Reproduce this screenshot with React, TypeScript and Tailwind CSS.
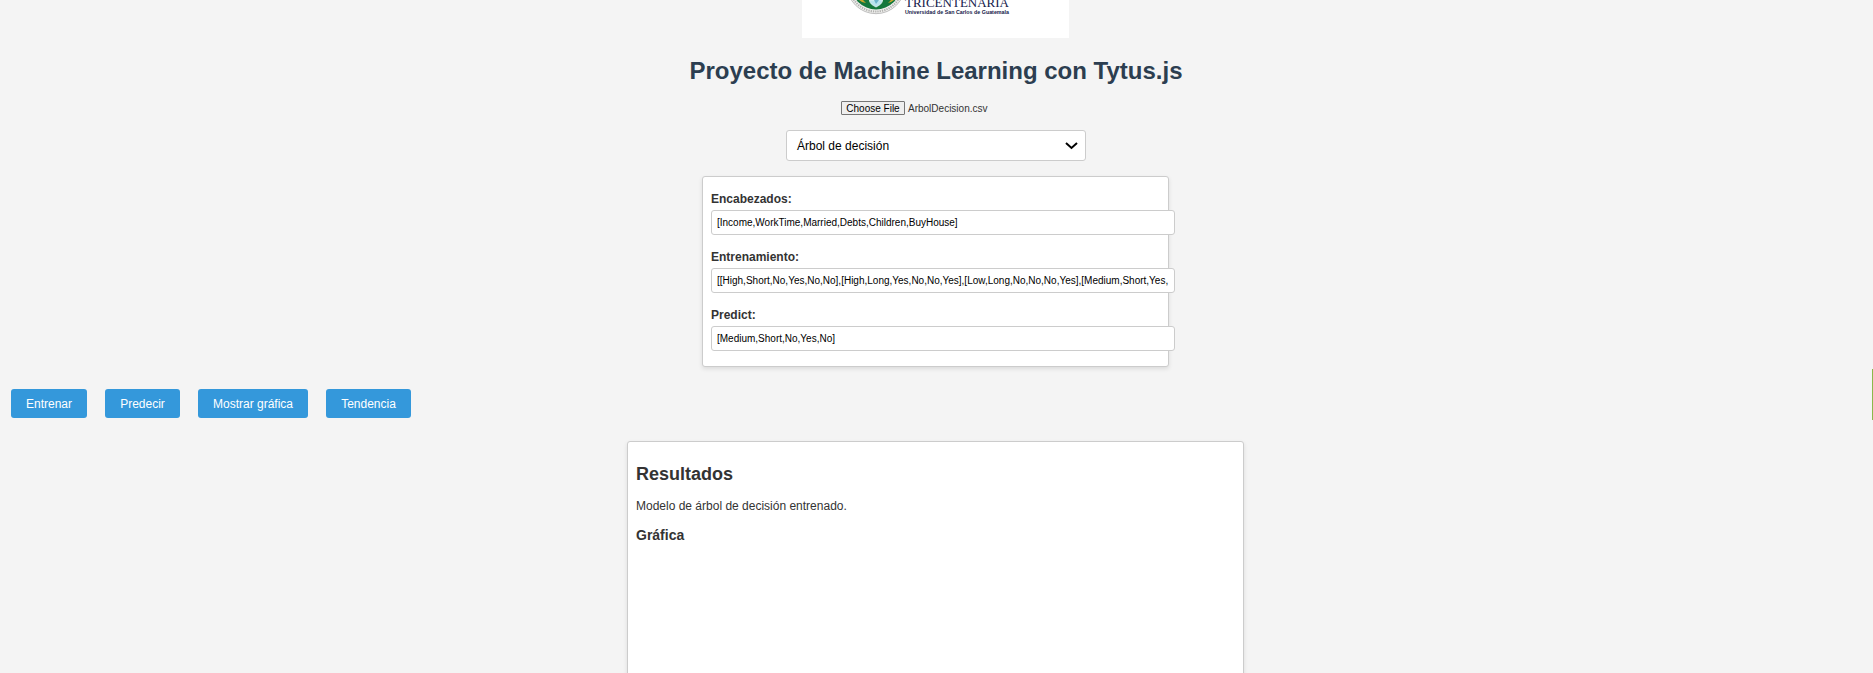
import React from "react";

function Logo() {
  return (
    <svg width="267" height="38" viewBox="0 0 267 38" className="block bg-white" role="img">
      <circle cx="74" cy="-15.300" r="29" fill="#efefed" stroke="#b0b0b0" strokeWidth="0.8" />
      <circle cx="74" cy="-15.300" r="26.800" fill="none" stroke="#b2b2b0" strokeWidth="2" strokeDasharray="1.3 1" />
      <circle cx="74" cy="-15.300" r="24.800" fill="#14783c" />
      <path d="M57 0h4l3 3-4-1zM86 3l3-3h3l-3 2z" fill="#c9a52c" />
      <path d="M67.500 0h13c0 3-2.500 5-6.500 7-4-2-6.500-4-6.500-7z" fill="#b8e4ee" stroke="#e9f5f3" strokeWidth="0.8" />
      <path d="M72 0l2 4 3-4z" fill="#6fb5cc" />
      <text x="103" y="7" textLength="104" lengthAdjust="spacingAndGlyphs" fill="#14204a" fontSize="13.5" fontFamily="'Liberation Serif', serif">TRICENTENARIA</text>
      <text x="103" y="13.500" textLength="104" lengthAdjust="spacingAndGlyphs" fill="#14204a" fontSize="5.5" fontWeight="700" fontFamily="'Liberation Sans', sans-serif">Universidad de San Carlos de Guatemala</text>
    </svg>
  );
}

function Field({ label, value }: { label: string; value: string }) {
  return (
    <div className="mb-[15px] flex flex-col">
      <label className="mb-1 h-[14px] text-[12px] leading-[14px] font-bold">{label}</label>
      <input
        type="text"
        readOnly
        value={value}
        className="h-[25px] w-[464px] rounded-[3px] border border-[#ccc] bg-white px-[5px] text-[10px] text-black"
      />
    </div>
  );
}

function Action({ label, width }: { label: string; width: string }) {
  return (
    <button className={`h-[29px] rounded-[3px] bg-[#3498db] text-[12px] text-white ${width}`}>{label}</button>
  );
}

export default function App() {
  return (
    <div className="flex h-[673px] overflow-hidden bg-[#f4f4f4] font-['Liberation_Sans',Arial,sans-serif] text-[#333]">
      <main className="flex w-[1872px] flex-col">
        <header className="ml-[802px] shrink-0">
          <Logo />
        </header>
        <h1 className="mt-[19px] h-7 shrink-0 text-center text-[24px] leading-7 font-bold text-[#2c3e50]">
          Proyecto de Machine Learning con Tytus.js
        </h1>
        <div className="mt-4 ml-[841px] flex h-[14px] shrink-0 items-center gap-[3px] text-[10px] leading-[14px]">
          <button className="h-[14px] w-[64px] rounded-[1px] border border-[#767676] bg-[#efefef] pt-px leading-[11px] text-black">Choose File</button>
          <span className="pt-px">ArbolDecision.csv</span>
        </div>
        <button className="mt-[15px] ml-[786px] flex h-[31px] w-[300px] shrink-0 items-center justify-between rounded-[3px] border border-[#ccc] bg-white pr-[7px] pl-[10px] text-[12px] text-black">
          <span>Árbol de decisión</span>
          <svg width="13" height="8" viewBox="0 0 13 8" fill="none" stroke="#000" strokeWidth="2">
            <path d="M1 1l5.500 5L12 1" />
          </svg>
        </button>
        <section className="mt-[15px] ml-[702px] h-[191px] w-[467px] shrink-0 rounded-[3px] border border-[#ccc] bg-white px-2 pt-[15px] shadow-[0_2px_4px_rgba(0,0,0,0.1)]">
          <Field label="Encabezados:" value="[Income,WorkTime,Married,Debts,Children,BuyHouse]" />
          <Field
            label="Entrenamiento:"
            value="[[High,Short,No,Yes,No,No],[High,Long,Yes,No,No,Yes],[Low,Long,No,No,No,Yes],[Medium,Short,Yes,"
          />
          <Field label="Predict:" value="[Medium,Short,No,Yes,No]" />
        </section>
        <nav className="mt-[22px] ml-[11px] flex shrink-0 gap-[18px]">
          <Action label="Entrenar" width="w-[76px]" />
          <Action label="Predecir" width="w-[75px]" />
          <Action label="Mostrar gráfica" width="w-[110px]" />
          <Action label="Tendencia" width="w-[85px]" />
        </nav>
        <section className="mt-[23px] ml-[627px] h-[300px] w-[617px] shrink-0 rounded-[3px] border border-[#ccc] bg-white px-2 pt-[22px] shadow-[0_2px_4px_rgba(0,0,0,0.1)]">
          <h2 className="text-[18px] leading-5 font-bold">Resultados</h2>
          <p className="mt-[15px] text-[12px] leading-[14px]">Modelo de árbol de decisión entrenado.</p>
          <h3 className="mt-[14px] text-[14px] leading-4 font-bold">Gráfica</h3>
        </section>
      </main>
      <aside className="mt-[369px] h-[51px] w-px bg-[#8bb84a]" />
    </div>
  );
}
